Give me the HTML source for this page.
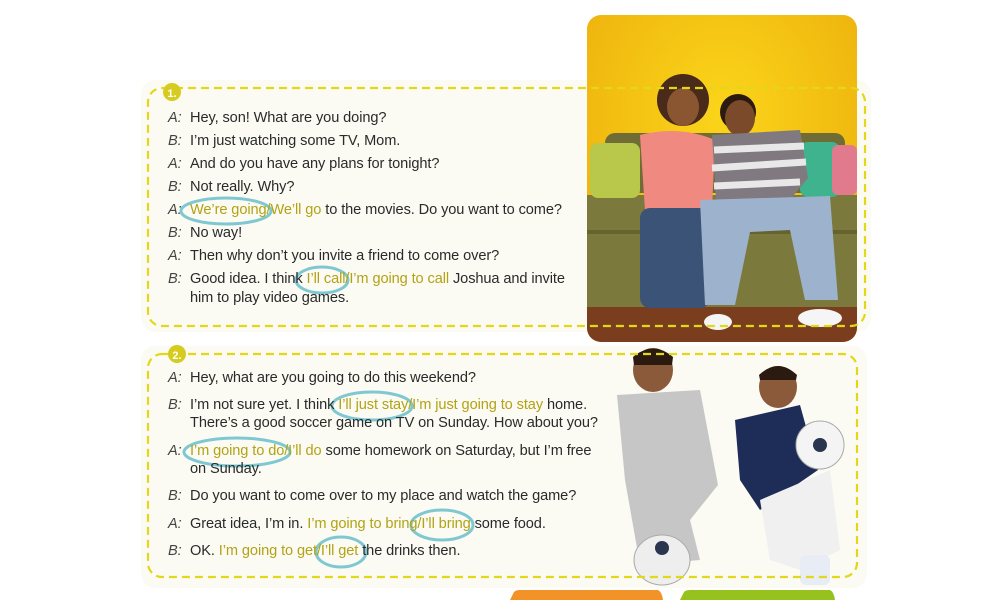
<!DOCTYPE html>
<html><head><meta charset="utf-8"><style>
body{margin:0;width:1000px;height:600px;overflow:hidden;background:#fff;position:relative;font-family:"Liberation Sans",sans-serif;}
svg{position:absolute;left:0;top:0}
.l{position:absolute;font-size:14.6px;color:#2a2a2a;white-space:nowrap;letter-spacing:-0.1px}
.l i{position:absolute;left:-22px;color:#444;font-style:italic}
.h{color:#b3a214}
</style></head><body>
<svg width="1000" height="600" viewBox="0 0 1000 600">
<defs>
<radialGradient id="wall" cx="0.5" cy="0.3" r="0.8"><stop offset="0" stop-color="#fbd51a"/><stop offset="1" stop-color="#eaa90a"/></radialGradient>
<clipPath id="pc"><rect x="587" y="15" width="270" height="327" rx="14"/></clipPath>
</defs>
<rect x="141" y="80" width="730" height="252" rx="14" fill="#fbfbf4"/>
<rect x="141" y="346" width="726" height="242" rx="14" fill="#fbfbf4"/>
<g clip-path="url(#pc)">
<rect x="587" y="15" width="270" height="327" fill="url(#wall)"/>
<rect x="587" y="305" width="270" height="40" fill="#7a3d1e"/>
<rect x="605" y="133" width="240" height="60" rx="10" fill="#6f6d35"/>
<rect x="587" y="195" width="270" height="112" fill="#7b7a3c"/>
<rect x="587" y="230" width="270" height="4" fill="#65642f"/>
<rect x="590" y="143" width="50" height="55" rx="8" fill="#b9c84a"/>
<rect x="800" y="142" width="40" height="55" rx="8" fill="#3fb28e"/>
<rect x="832" y="145" width="25" height="50" rx="6" fill="#e27a8e"/>
<circle cx="683" cy="100" r="26" fill="#4a2a18"/>
<ellipse cx="683" cy="107" rx="16" ry="19" fill="#8a5632"/>
<path d="M640 135 Q680 125 715 140 L712 210 L645 210 Z" fill="#f08a80"/>
<rect x="640" y="208" width="70" height="100" rx="10" fill="#3c5378"/>
<circle cx="738" cy="112" r="18" fill="#2a1a10"/>
<ellipse cx="740" cy="118" rx="15" ry="18" fill="#7a4a2a"/>
<path d="M712 135 L800 130 L808 178 L790 200 L716 200 Z" fill="#807a80"/>
<path d="M714 150 L804 146 M712 168 L806 162 M714 186 L800 182" stroke="#e8e8e8" stroke-width="7"/>
<path d="M700 200 L830 196 L838 300 L805 300 L790 230 L750 232 L735 305 L705 305 Z" fill="#9db3cd"/>
<ellipse cx="718" cy="322" rx="14" ry="8" fill="#f5f5f5"/>
<ellipse cx="820" cy="318" rx="22" ry="9" fill="#f5f5f5"/>
</g>
<ellipse cx="653" cy="370" rx="20" ry="22" fill="#8a5a3a"/>
<path d="M633 357 Q653 340 673 357 L672 365 L634 365 Z" fill="#2a1a10"/>
<path d="M617 395 L700 390 L718 485 L690 520 L700 560 L640 565 L625 480 Z" fill="#c6c6c6"/>
<ellipse cx="662" cy="560" rx="28" ry="25" fill="#eeeeee" stroke="#aaa"/>
<circle cx="662" cy="548" r="7" fill="#2a3550"/>
<ellipse cx="778" cy="387" rx="19" ry="21" fill="#8a5a3a"/>
<path d="M759 375 Q778 357 797 375 L796 380 L760 380 Z" fill="#2a1a10"/>
<path d="M735 420 L800 405 L818 470 L760 510 L740 480 Z" fill="#1e2c58"/>
<path d="M760 500 L830 470 L840 550 L800 570 L770 560 Z" fill="#f0f0f0"/>
<circle cx="820" cy="445" r="24" fill="#f4f4f4" stroke="#aaa"/>
<circle cx="820" cy="445" r="7" fill="#2a3550"/>
<rect x="800" y="555" width="30" height="30" rx="6" fill="#e8ecf4"/>
<rect x="148" y="88" width="717" height="238" rx="14" fill="none" stroke="#e3d71a" stroke-width="2.2" stroke-dasharray="8 5"/>
<rect x="148" y="354" width="709" height="223" rx="14" fill="none" stroke="#e3d71a" stroke-width="2.2" stroke-dasharray="8 5"/>
<circle cx="172" cy="92" r="9" fill="#d6cb1f"/>
<text x="172" y="97" font-size="11" font-weight="bold" fill="#fff" text-anchor="middle" font-family="Liberation Sans">1.</text>
<circle cx="177" cy="354" r="9" fill="#d6cb1f"/>
<text x="177" y="359" font-size="11" font-weight="bold" fill="#fff" text-anchor="middle" font-family="Liberation Sans">2.</text>
<path d="M510 600 L514 592 Q516 590 520 590 L658 590 Q662 592 663 600Z" fill="#f39226"/>
<path d="M680 600 L684 592 Q686 590 690 590 L830 590 Q834 592 835 600Z" fill="#96c21e"/>
<g fill="none" stroke="#7fc8d2" stroke-width="3">
<ellipse cx="226" cy="211" rx="45" ry="13"/>
<ellipse cx="322" cy="280" rx="26" ry="13"/>
<ellipse cx="372" cy="406" rx="40" ry="14"/>
<ellipse cx="237" cy="452" rx="53" ry="14"/>
<ellipse cx="442" cy="525" rx="31" ry="15"/>
<ellipse cx="341" cy="552" rx="25" ry="15"/>
</g>
</svg>
<div class="l" style="left:190px;top:110px"><i>A:</i>Hey, son! What are you doing?</div>
<div class="l" style="left:190px;top:133px"><i>B:</i>I’m just watching some TV, Mom.</div>
<div class="l" style="left:190px;top:156px"><i>A:</i>And do you have any plans for tonight?</div>
<div class="l" style="left:190px;top:179px"><i>B:</i>Not really. Why?</div>
<div class="l" style="left:190px;top:202px"><i>A:</i><span class="h">We’re going/We’ll go</span> to the movies. Do you want to come?</div>
<div class="l" style="left:190px;top:225px"><i>B:</i>No way!</div>
<div class="l" style="left:190px;top:248px"><i>A:</i>Then why don’t you invite a friend to come over?</div>
<div class="l" style="left:190px;top:271px"><i>B:</i>Good idea. I think <span class="h">I’ll call/I’m going to call</span> Joshua and invite</div>
<div class="l" style="left:190px;top:290px">him to play video games.</div>
<div class="l" style="left:190px;top:370px"><i>A:</i>Hey, what are you going to do this weekend?</div>
<div class="l" style="left:190px;top:397px"><i>B:</i>I’m not sure yet. I think <span class="h">I’ll just stay/I’m just going to stay</span> home.</div>
<div class="l" style="left:190px;top:415px">There’s a good soccer game on TV on Sunday. How about you?</div>
<div class="l" style="left:190px;top:443px"><i>A:</i><span class="h">I’m going to do/I’ll do</span> some homework on Saturday, but I’m free</div>
<div class="l" style="left:190px;top:461px">on Sunday.</div>
<div class="l" style="left:190px;top:488px"><i>B:</i>Do you want to come over to my place and watch the game?</div>
<div class="l" style="left:190px;top:516px"><i>A:</i>Great idea, I’m in. <span class="h">I’m going to bring/I’ll bring</span> some food.</div>
<div class="l" style="left:190px;top:543px"><i>B:</i>OK. <span class="h">I’m going to get/I’ll get</span> the drinks then.</div>
</body></html>
